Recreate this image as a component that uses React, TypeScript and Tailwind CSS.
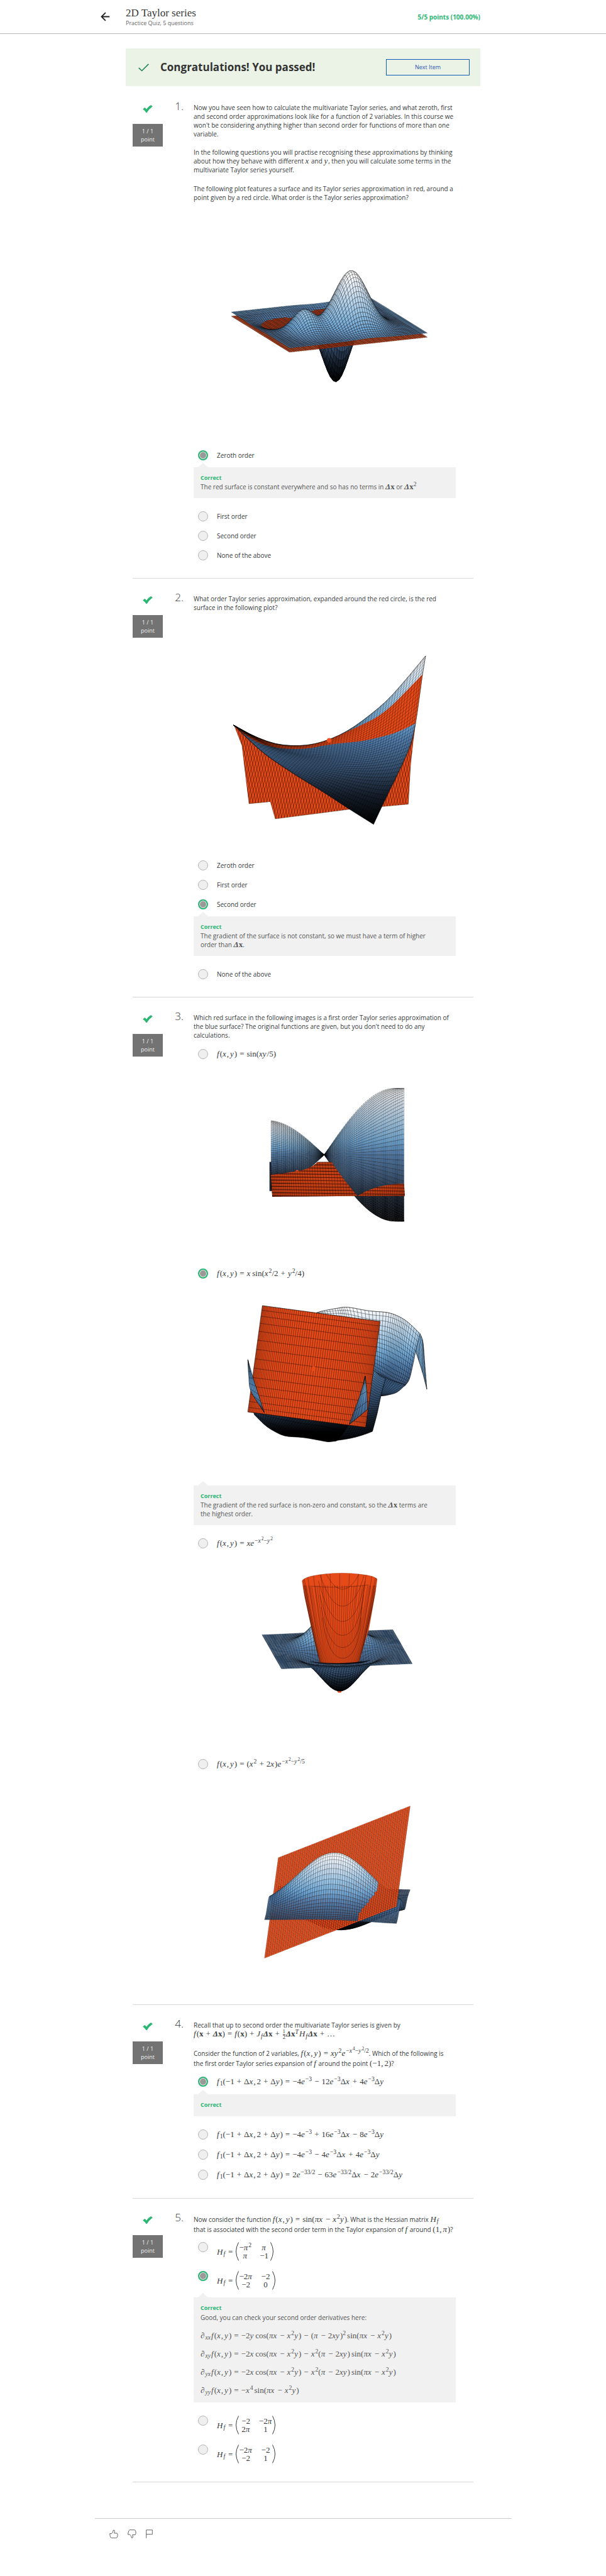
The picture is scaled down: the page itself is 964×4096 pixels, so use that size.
import React, { ReactNode, useId } from "react";

/* ---------- Inline math ---------- */

function braceEnd(src: string, open: number): number {
  let depth = 0;
  for (let i = open; i < src.length; i++) {
    if (src[i] === "{") depth++;
    if (src[i] === "}" && --depth === 0) return i;
  }
  return src.length;
}

function typeset(src: string): ReactNode[] {
  const out: ReactNode[] = [];
  let i = 0;
  while (i < src.length) {
    const c = src[i];
    if (c === "^" || c === "_") {
      const end = braceEnd(src, i + 1);
      const inner = typeset(src.slice(i + 2, end));
      out.push(c === "^" ? <sup key={i}>{inner}</sup> : <sub key={i}>{inner}</sub>);
      i = end + 1;
    } else if (c === "\\") {
      const name = /^[a-z]+/.exec(src.slice(i + 1))![0];
      out.push(
        name === "half" ? (
          <span key={i} className="mx-px inline-flex flex-col items-center align-middle text-[8px] leading-[8px]">
            <span className="border-b border-current">1</span>
            <span>2</span>
          </span>
        ) : (
          <span key={i} className={src[i - 1] === " " ? "" : "ml-0.5"}>{name}</span>
        ),
      );
      i += name.length + 1;
    } else if (c === "@") {
      out.push(
        <b key={i} className={src[i + 1] === "Δ" ? "italic" : ""}>{src[i + 1]}</b>,
      );
      i += 2;
    } else if (c === " " && src[i + 2] === " ") {
      out.push(<span key={i} className="mx-1">{src[i + 1]}</span>);
      i += 3;
    } else if (c === ",") {
      out.push(<span key={i} className="mr-0.5">,</span>);
      i += 1;
    } else if (/[a-zA-Zπ∂]/.test(c)) {
      const run = /^[a-zA-Zπ∂]+/.exec(src.slice(i))![0];
      out.push(<i key={i} className="mr-px">{run}</i>);
      i += run.length;
    } else {
      out.push(<span key={i}>{c}</span>);
      i += 1;
    }
  }
  return out;
}

const M = ({ t }: { t: string }) => (
  <span className="whitespace-nowrap font-['Liberation_Serif',serif] text-[13px] leading-none">{typeset(t)}</span>
);

const Paren = ({ flip }: { flip?: boolean }) => (
  <svg viewBox="0 0 6 30" className={flip ? "h-[30px] w-1.5 -scale-x-100" : "h-[30px] w-1.5"} fill="none" stroke="currentColor">
    <path d="M5.5 .5Q-2.5 15 5.5 29.5" />
  </svg>
);

const Matrix = ({ cells }: { cells: string[] }) => (
  <span className="inline-flex items-center">
    <M t="H_{f} = " />
    <span className="inline-flex items-center">
      <Paren />
      <span className="grid grid-cols-2 items-center justify-items-center gap-x-2.5 leading-[14px]">
        {cells.map((c, i) => (
          <M key={i} t={c} />
        ))}
      </span>
      <Paren flip />
    </span>
  </span>
);

/* ---------- Surface plots ---------- */

type Pt = [number, number];
const RED = "#e64a19";

const RAMP: [number, number[]][] = [
  [0, [0, 0, 0]],
  [0.18, [24, 34, 47]],
  [0.35, [60, 88, 122]],
  [0.5, [82, 124, 170]],
  [0.6, [112, 168, 214]],
  [0.75, [168, 204, 232]],
  [0.88, [216, 230, 243]],
  [1, [255, 255, 255]],
];

function shade(t: number): string {
  const v = Math.max(0, Math.min(1, t));
  const k = Math.max(1, RAMP.findIndex((r) => r[0] >= v));
  const [t0, a] = RAMP[k - 1];
  const [t1, b] = RAMP[k];
  const f = (v - t0) / (t1 - t0);
  return `rgb(${a.map((q, i) => Math.round(q + (b[i] - q) * f)).join(",")})`;
}

type Layer = { z: (a: number, d: number) => number; fill: (z: number) => string };

function heightField(center: Pt, av: Pt, dv: Pt, layers: Layer[], n = 52) {
  const ground = (a: number, d: number): Pt => [center[0] + a * av[0] + d * dv[0], center[1] + a * av[1] + d * dv[1]];
  const at = (i: number) => -1 + (2 * i) / n;
  const quads: { depth: number; z: number; d: string; fill: string }[] = [];
  for (let i = 0; i < n; i++)
    for (let j = 0; j < n; j++) {
      const mid = ground(at(i + 0.5), at(j + 0.5));
      for (const layer of layers) {
        const pts = [[i, j], [i + 1, j], [i + 1, j + 1], [i, j + 1]].map(([p, q]) => {
          const g = ground(at(p), at(q));
          return `${g[0].toFixed(1)} ${(g[1] - layer.z(at(p), at(q))).toFixed(1)}`;
        });
        const z = layer.z(at(i + 0.5), at(j + 0.5));
        quads.push({ depth: mid[1], z, d: `M${pts.join("L")}Z`, fill: layer.fill(z) });
      }
    }
  quads.sort((p, q) => p.depth - q.depth || p.z - q.z);
  return quads.map((q, k) => <path key={k} d={q.d} fill={q.fill} />);
}

function Plot({ y, h, label, line = 0.3, className, children }: { y: number; h: number; label: string; line?: number; className: string; children: ReactNode }) {
  return (
    <svg
      role="img"
      aria-label={label}
      viewBox={`74 ${y} 1387 ${h}`}
      preserveAspectRatio="none"
      className={`block w-full [&_path]:[vector-effect:non-scaling-stroke] ${className}`}
      stroke="#000"
      strokeWidth={line}
      strokeLinejoin="round"
    >
      {children}
    </svg>
  );
}

/* A smooth polyline sampled at t in [0, 1]. */
function along(pts: Pt[], t: number): Pt {
  if (pts.length === 1) return pts[0];
  const s = Math.min(pts.length - 1.0001, Math.max(0, t * (pts.length - 1)));
  const k = Math.floor(s);
  const f = s - k;
  const p = [pts[Math.max(0, k - 1)], pts[k], pts[k + 1], pts[Math.min(pts.length - 1, k + 2)]];
  return [0, 1].map((c) => {
    const [a, b, e, g] = p.map((q) => q[c]);
    return 0.5 * (2 * b + (e - a) * f + (2 * a - 5 * b + 4 * e - g) * f * f + (3 * b - a - 3 * e + g) * f * f * f);
  }) as Pt;
}

const poly = (pts: Pt[]) => "M" + pts.map((p) => `${p[0].toFixed(1)} ${p[1].toFixed(1)}`).join("L");
const curve = (pts: Pt[]) => poly(Array.from({ length: 61 }, (_, i) => along(pts, i / 60)));

type Edges = { top: Pt[]; right: Pt[]; bottom: Pt[]; left: Pt[] };

function coons(e: Edges, u: number, v: number): Pt {
  const t = along(e.top, u), b = along(e.bottom, u), l = along(e.left, v), r = along(e.right, v);
  const t0 = along(e.top, 0), t1 = along(e.top, 1), b0 = along(e.bottom, 0), b1 = along(e.bottom, 1);
  return [0, 1].map(
    (c) =>
      (1 - v) * t[c] + v * b[c] + (1 - u) * l[c] + u * r[c] -
      ((1 - u) * (1 - v) * t0[c] + u * (1 - v) * t1[c] + (1 - u) * v * b0[c] + u * v * b1[c]),
  ) as Pt;
}

function Patch({ e, nu, nv, fill }: { e: Edges; nu: number; nv: number; fill: string }) {
  const steps = Array.from({ length: 25 }, (_, i) => i / 24);
  const lines: string[] = [];
  for (let i = 0; i <= nu; i++) lines.push(poly(steps.map((v) => coons(e, i / nu, v))));
  for (let j = 0; j <= nv; j++) lines.push(poly(steps.map((u) => coons(e, u, j / nv))));
  const outline = [
    ...steps.map((s) => along(e.top, s)),
    ...steps.map((s) => along(e.right, s)),
    ...steps.map((s) => along(e.bottom, 1 - s)),
    ...steps.map((s) => along(e.left, 1 - s)),
  ];
  return (
    <>
      {fill !== "none" && <path d={poly(outline) + "Z"} fill={fill} />}
      <path d={lines.join("")} fill="none" />
    </>
  );
}

function Fade({ id, y1, y2, from = 1, to = 0 }: { id: string; y1: number; y2: number; from?: number; to?: number }) {
  return (
    <linearGradient id={id} gradientUnits="userSpaceOnUse" x1="0" x2="0" y1={y1} y2={y2}>
      {Array.from({ length: 13 }, (_, i) => (
        <stop key={i} offset={i / 12} stopColor={shade(from + ((to - from) * i) / 12)} />
      ))}
    </linearGradient>
  );
}

const bump = (a: number, d: number, ca: number, cd: number, sa: number, sd: number) =>
  Math.exp(-(((a - ca) / sa) ** 2) / 2 - ((d - cd) / sd) ** 2 / 2);

function PlotZeroth() {
  const f = (a: number, d: number) =>
    380 * bump(a, d, 0.19, 0.3, 0.22, 0.25) +
    140 * bump(a, d, -0.47, 0.25, 0.14, 0.22) -
    462 * bump(a, d, 0.24, -0.34, 0.18, 0.22) -
    130 * bump(a, d, -0.45, -0.3, 0.22, 0.2);
  return (
    <Plot y={-273} h={1624} label="Surface with a constant red approximation" className="h-[387px]">
      {heightField([792, 532], [364.5, -50], [154, 120], [
        { z: () => -28, fill: () => "#e04818" },
        { z: f, fill: (z) => shade((z + 430) / 790) },
      ], 58)}
    </Plot>
  );
}

function PlotSecond() {
  const id = useId();
  const top: Pt[] = [[285, 583], [390, 655], [500, 706], [600, 721], [700, 712], [800, 675], [900, 612], [1000, 522], [1100, 415], [1200, 275], [1301, 122]];
  const right: Pt[] = [[1301, 122], [1285, 245], [1267, 410], [1248, 570], [1220, 720], [1165, 880], [1095, 1060], [1026, 1245]];
  const bottom: Pt[] = [[285, 583], [440, 765], [600, 905], [760, 1030], [900, 1145], [1026, 1245]];
  const hatch: string[] = [];
  for (let x = 100; x < 1500; x += 15) hatch.push(`M${x} 550Q${x + 70} 850 ${x + 130} 1230`, `M${x + 110} 550Q${x + 50} 850 ${x - 50} 1230`);
  const back = "M290 590L330 720L345 880L367 1108L480 1094L506 1209L900 1145L1070 1127L1210 1111L1222 850L1235 700L1248 570L800 780L500 745Z";
  return (
    <Plot y={-172} h={1624} label="Saddle surface with a red second order approximation" className="h-[387px]">
      <defs>
        <Fade id={id + "b"} y1={122} y2={1230} />
        <clipPath id={id + "c"}>
          <path d={back} />
        </clipPath>
      </defs>
      <path d={back} fill={RED} />
      <g clipPath={`url(#${id}c)`} strokeWidth="0.4">
        <path d={hatch.join("")} fill="none" />
      </g>
      <Patch e={{ top, right, bottom, left: [[285, 583]] }} nu={1} nv={1} fill={`url(#${id}b)`} />
      <path
        stroke="none"
        fill={RED}
        d={
          curve([[285, 583], [390, 655], [500, 706], [600, 721], [700, 712], [800, 675], [880, 630], [960, 583], [1040, 532], [1120, 455], [1200, 355], [1285, 245]]) +
          curve([[1285, 245], [1267, 410], [1248, 572]]).replace("M", "L") +
          curve([[1248, 572], [1150, 630], [1060, 663], [960, 690], [840, 706], [750, 722], [680, 738], [600, 742], [500, 731], [400, 690], [300, 605]]).replace("M", "L") +
          "Z"
        }
      />
      <Patch e={{ top, right, bottom, left: [[285, 583]] }} nu={64} nv={40} fill="none" />
      <ellipse cx="791" cy="685" rx="12" ry="16" fill="#f04e23" stroke="none" />
    </Plot>
  );
}

function PlotSine() {
  const id = useId();
  const lobe = (x0: number, x1: number, amp: number, quarter: number, n: number) => {
    const quads: ReactNode[] = [];
    const rows = 44;
    for (let i = 0; i < n; i++)
      for (let j = 0; j < rows; j++) {
        const val = (x: number, t: number) => Math.sin(((Math.abs(x - 765) / quarter) * Math.PI * t) / 2);
        const xs = [x0 + ((x1 - x0) * i) / n, x0 + ((x1 - x0) * (i + 1)) / n];
        const ts = [-1 + (2 * j) / rows, -1 + (2 * (j + 1)) / rows];
        const p = (x: number, t: number) => `${x.toFixed(1)} ${(597 - amp * val(x, t)).toFixed(1)}`;
        quads.push(
          <path
            key={`${i}-${j}`}
            d={`M${p(xs[0], ts[0])}L${p(xs[1], ts[0])}L${p(xs[1], ts[1])}L${p(xs[0], ts[1])}Z`}
            fill={shade(0.5 + 0.5 * val((xs[0] + xs[1]) / 2, (ts[0] + ts[1]) / 2))}
          />,
        );
      }
    return quads;
  };
  return (
    <Plot y={0} h={1322} label="Sine surface with a red plane below it" className="mt-[3px] h-[315px]">
      <defs>
        <clipPath id={id + "r"}>
          <path d="M476 645L482 731Q560 720 620 706Q700 690 730 643L803 643Q850 735 941 872L490 877Z" />
          <path d="M941 872Q980 838 1040 815T1187 790L1192 872Z" />
        </clipPath>
      </defs>
      <path d="M476 645L486 645L490 838L476 838Z" fill="#1c2a3a" />
      {lobe(484, 765, 229, 300, 26)}
      {lobe(765, 1187, 444, 375, 40)}
      <g clipPath={`url(#${id}r)`}>
        <Patch
          e={{ top: [[476, 645], [1181, 645]], right: [[1181, 645], [1192, 872]], bottom: [[490, 877], [1192, 872]], left: [[476, 645], [490, 877]] }}
          nu={60}
          nv={28}
          fill="#e04818"
        />
        {Array.from({ length: 11 }, (_, i) => (
          <path key={i} d={`M470 ${660 + i * 21}L1195 ${672 + i * 21}`} stroke="#200800" strokeWidth="0.8" />
        ))}
      </g>
      <path d="M610 708L622 697L632 706Z" fill="#f04e23" stroke="none" />
    </Plot>
  );
}

function PlotRipple() {
  const id = useId();
  return (
    <Plot y={-40} h={1163} line={0.4} label="Rippled surface with a tangent red plane" className="h-[318px]">
      <defs>
        <Fade id={id + "a"} y1={100} y2={620} to={0.25} />
        <Fade id={id + "b"} y1={460} y2={860} from={0.58} to={0.05} />
        <Fade id={id + "c"} y1={500} y2={790} from={0.72} to={0.3} />
        <Fade id={id + "d"} y1={690} y2={830} from={0.3} to={0} />
      </defs>
      <Patch
        e={{
          top: [[1272, 255], [1285, 290], [1290, 330]],
          right: [[1290, 330], [1300, 470], [1308, 578]],
          bottom: [[1247, 350], [1285, 480], [1308, 578]],
          left: [[1272, 255], [1255, 300], [1247, 350]],
        }}
        nu={4}
        nv={8}
        fill="#7fb0da"
      />
      <Patch
        e={{
          top: [[725, 133], [760, 122], [835, 107], [890, 101], [1000, 122], [1100, 132], [1160, 155], [1210, 190], [1272, 255]],
          right: [[1272, 255], [1250, 350], [1235, 430], [1215, 520], [1190, 560]],
          bottom: [[725, 200], [850, 300], [980, 430], [1065, 500], [1120, 535], [1190, 560]],
          left: [[725, 133], [725, 200]],
        }}
        nu={44}
        nv={15}
        fill={`url(#${id}a)`}
      />
      <Patch
        e={{
          top: [[1000, 460], [1060, 490], [1120, 525], [1195, 552]],
          right: [[1195, 552], [1150, 595], [1100, 612], [1065, 617]],
          bottom: [[1000, 600], [1030, 610], [1065, 617]],
          left: [[1000, 460], [1000, 600]],
        }}
        nu={20}
        nv={20}
        fill="#40628a"
      />
      <Patch
        e={{
          top: [[985, 460], [1030, 472], [1060, 500], [1090, 515]],
          right: [[1090, 515], [1065, 617], [1045, 720], [1020, 823]],
          bottom: [[820, 877], [880, 868], [935, 855], [985, 838], [1020, 823]],
          left: [[985, 460], [940, 650], [820, 877]],
        }}
        nu={15}
        nv={28}
        fill={`url(#${id}b)`}
      />
      <Patch
        e={{
          top: [[390, 700], [600, 720], [800, 750], [900, 770]],
          right: [[900, 770], [860, 840], [830, 878]],
          bottom: [[395, 725], [450, 785], [500, 822], [560, 850], [650, 858], [730, 873], [785, 883], [830, 878]],
          left: [[390, 700], [395, 725]],
        }}
        nu={44}
        nv={3}
        fill={`url(#${id}d)`}
      />
      <path d="M505 824Q560 852 650 858T785 883L830 878Q760 818 650 818T505 824Z" fill="#000" />
      <Patch
        e={{ top: [[438, 92], [1061, 184]], right: [[1061, 184], [984, 800]], bottom: [[361, 710], [984, 800]], left: [[438, 92], [361, 710]] }}
        nu={64}
        nv={14}
        fill={RED}
      />
      <path d="M697 462L706 440L722 455L716 470L700 476Z" fill={RED} stroke="none" />
      <Patch
        e={{
          top: [[361, 406]],
          right: [[361, 406], [385, 500], [420, 620], [447, 712]],
          bottom: [[447, 712]],
          left: [[361, 406], [366, 500], [378, 590], [447, 712]],
        }}
        nu={4}
        nv={8}
        fill="#5c8fc0"
      />
      <Patch
        e={{
          top: [[982, 502]],
          right: [[982, 502], [990, 590], [994, 695]],
          bottom: [[897, 783], [940, 745], [994, 695]],
          left: [[982, 502], [955, 610], [897, 783]],
        }}
        nu={6}
        nv={4}
        fill={`url(#${id}c)`}
      />
    </Plot>
  );
}

function PlotBucket() {
  const f = (a: number, d: number) => {
    const x = 2.4 * d;
    const y = 2.4 * a;
    return -571 * x * Math.exp(-x * x - y * y);
  };
  const xs = Array.from({ length: 49 }, (_, i) => -1 + i / 24);
  const outline =
    "M648 142Q660 112 760 97T960 98Q1030 108 1045 130L1036 215L1000 470L975 570L948 686Q845 698 743 686L722 590L700 470L662 250Z";
  return (
    <Plot y={-46} h={1343} label="Surface with a red paraboloid" className="h-[320px]">
      <ellipse cx="846" cy="877" rx="11" ry="11" fill="#f04e23" stroke="none" />
      {heightField([833.5, 598], [346, -17], [51.5, 113.5], [{ z: f, fill: (z) => shade((z + 245) / 500) }])}
      <defs>
        <clipPath id="bucket">
          <path d={outline} />
        </clipPath>
      </defs>
      <path d={outline} fill={RED} stroke="#7a2108" />
      <g clipPath="url(#bucket)" fill="none">
        {xs.map((t, i) => {
          const s = Math.sin((t * Math.PI) / 2);
          return <path key={i} d={`M${847 + 198 * s} ${i % 4 ? 172 : 95}Q${847 + 155 * s} 430 ${846 + 104 * s} 695`} />;
        })}
        {[197, 310, 412, 505, 586, 658].map((y) => (
          <path key={y} d={`M${700 + y / 12} ${y - 270}C780 ${y - 60} 820 ${y} 862 ${y}S950 ${y - 60} ${1015 - y / 12} ${y - 270}`} />
        ))}
        <path d="M700 177Q850 195 1000 168" />
      </g>
      <path d="M690 680Q845 708 1010 672L960 690Q845 704 740 692Z" fill="#05080c" />
    </Plot>
  );
}

function PlotHill() {
  const f = (a: number, d: number) => {
    const x = 2.3 * d;
    const y = 2.8 * a;
    return 329 * (x * x + 2 * x) * Math.exp(-x * x - (y * y) / 5);
  };
  return (
    <Plot y={-13} h={1453} line={0.2} label="Hill and valley cut by a steep red plane" className="h-[346px]">
      {heightField([834.5, 865], [349, 12.5], [-36.5, 114.5], [
        { z: (a, d) => 153 + 185 * a - 221 * d, fill: () => "#f04e1a" },
        { z: f, fill: (z) => shade((z + 188) / 576) },
      ], 58)}
    </Plot>
  );
}

/* ---------- Quiz parts ---------- */

function Option({ name, checked, math, top, children }: { name: string; checked?: boolean; math?: boolean; top?: boolean; children: ReactNode }) {
  return (
    <label
      className={
        top ? "flex h-[46px] items-start gap-3.5 pt-2 pl-[7px]" : math ? "flex h-8 items-center gap-3.5 pl-[7px]" : "flex h-[31px] items-center gap-3.5 pl-[7px]"
      }
    >
      <input
        type="radio"
        name={name}
        defaultChecked={checked}
        className="size-4 shrink-0 appearance-none rounded-full border border-[#b5b5b5] bg-[#efefef] checked:border-2 checked:border-[#2bb673] checked:bg-[#999] checked:shadow-[inset_0_0_0_1px_#efefef]"
      />
      <span>{children}</span>
    </label>
  );
}

function Feedback({ children }: { children?: ReactNode }) {
  return (
    <div className="relative mt-1 mb-[13px] bg-[#f1f1f1] px-[11px] pt-2.5 pb-[11px] text-[#555]">
      <span className="absolute -top-[7px] left-[7px] border-x-8 border-b-[7px] border-x-transparent border-b-[#f1f1f1]" />
      <p className="text-[9px] leading-[14px] font-bold text-[#2bb673]">Correct</p>
      {children}
    </div>
  );
}

const BoldCheck = () => (
  <svg viewBox="0 0 22 17" className="h-3 w-4" fill="#2bb673">
    <path d="M0 9.5L3.8 5.8Q6.5 7 8 9.6Q12 3.5 18.2 0L22 3.2Q14.5 8.5 9.2 17H7.4Q4.5 12 0 9.5Z" />
  </svg>
);

function Question({ n, children }: { n: number; children: ReactNode }) {
  return (
    <section className="mx-[11px] flex border-b border-[#d8d8d8] pb-[21px]">
      <div className="flex w-12 shrink-0 flex-col items-center pt-7">
        <BoldCheck />
        <div className="mt-[18px] w-full bg-[#737373] py-[5px] text-center text-[9px] leading-[13px] text-[#f0f0f0]">
          1 / 1
          <br />
          point
        </div>
      </div>
      <div className="w-[49px] shrink-0 pt-[18px] pr-4 text-right text-[17px] leading-6 font-light">{n}.</div>
      <div className="mr-7 min-w-0 flex-1 pt-[25px]">{children}</div>
    </section>
  );
}

export default function App() {
  return (
    <div className="bg-white font-['Open_Sans',sans-serif] text-[10px] leading-[14px] text-[#373a3c]">
      <header className="border-b border-[#bbb]">
        <div className="mx-auto flex h-[53px] max-w-[644px] items-center pr-10">
          <button type="button" aria-label="Back" className="w-10">
            <svg viewBox="0 0 20 20" className="size-[15px]" fill="none" stroke="#222" strokeWidth="2.4">
              <path d="M19 10H2M10.500 1.500L2 10L10.500 18.500" />
            </svg>
          </button>
          <div className="flex-1">
            <h1 className="font-['Liberation_Serif',serif] text-[17px] leading-5">2D Taylor series</h1>
            <p className="text-[9px] leading-3 text-[#666]">Practice Quiz, 5 questions</p>
          </div>
          <p className="font-bold text-[#2bb673]">5/5 points (100.00%)</p>
        </div>
      </header>

      <main className="mx-auto max-w-[564px] pt-[23px]">
        <div className="mb-0.5 flex h-[60px] items-center bg-[#ebf3e7] pr-[17px] pl-5">
          <svg viewBox="0 0 24 18" className="h-[13px] w-[17px]" fill="none" stroke="#1f8354" strokeWidth="2.200">
            <path d="M1 9.500L8 16L23 1" />
          </svg>
          <h2 className="ml-[18px] flex-1 text-[17px] font-bold text-[#333]">Congratulations! You passed!</h2>
          <button type="button" className="h-[26px] w-[133px] border border-[#0f5cb8] text-[9px] text-[#2a56b5]">
            Next Item
          </button>
        </div>

        <Question n={1}>
          <p>
            Now you have seen how to calculate the multivariate Taylor series, and what zeroth, first and second order approximations look like for a
            function of 2 variables. In this course we won't be considering anything higher than second order for functions of more than one
            variable.
          </p>
          <p className="mt-[15px]">
            In the following questions you will practise recognising these approximations by thinking about how they behave with different{" "}
            <M t="x" /> and <M t="y" />, then you will calculate some terms in the multivariate Taylor series yourself.
          </p>
          <p className="mt-4">
            The following plot features a surface and its Taylor series approximation in red, around a point given by a red circle. What order is
            the Taylor series approximation?
          </p>
          <PlotZeroth />
          <Option name="q1" checked>Zeroth order</Option>
          <Feedback>
            <p>
              The red surface is constant everywhere and so has no terms in <M t="@Δ@x" /> or <M t="@Δ@x^{2}" />
            </p>
          </Feedback>
          <Option name="q1">First order</Option>
          <Option name="q1">Second order</Option>
          <Option name="q1">None of the above</Option>
        </Question>

        <Question n={2}>
          <p>What order Taylor series approximation, expanded around the red circle, is the red surface in the following plot?</p>
          <PlotSecond />
          <Option name="q2">Zeroth order</Option>
          <Option name="q2">First order</Option>
          <Option name="q2" checked>Second order</Option>
          <Feedback>
            <p>
              The gradient of the surface is not constant, so we must have a term of higher <br />
              order than <M t="@Δ@x" />.
            </p>
          </Feedback>
          <Option name="q2">None of the above</Option>
        </Question>

        <Question n={3}>
          <p className="mb-[7px]">
            Which red surface in the following images is a first order Taylor series approximation of the blue surface? The original functions are
            given, but you don't need to do any calculations.
          </p>
          <Option name="q3"><M t="f(x,y) = \sin(xy/5)" /></Option>
          <PlotSine />
          <Option name="q3" checked><M t="f(x,y) = x\sin(x^{2}/2 + y^{2}/4)" /></Option>
          <PlotRipple />
          <Feedback>
            <p>
              The gradient of the red surface is non-zero and constant, so the <M t="@Δ@x" /> terms are <br />
              the highest order.
            </p>
          </Feedback>
          <Option name="q3"><M t="f(x,y) = xe^{−x^{2}−y^{2}}" /></Option>
          <PlotBucket />
          <Option name="q3"><M t="f(x,y) = (x^{2} + 2x)e^{−x^{2}−y^{2}/5}" /></Option>
          <PlotHill />
        </Question>

        <Question n={4}>
          <p>
            Recall that up to second order the multivariate Taylor series is given by
            <br />
            <M t="f(@x + @Δ@x) = f(@x) + J_{f}@Δ@x + \half@Δ@x^{T}H_{f}@Δ@x + …" />
          </p>
          <p className="mt-[13px] mb-[5px] leading-4">
            Consider the function of 2 variables, <M t="f(x,y) = xy^{2}e^{−x^{4}−y^{2}/2}" />. Which of the following is <br />
            the first order Taylor series expansion of <M t="f" /> around the point <M t="(−1,2)" />?
          </p>
          <Option name="q4" math checked><M t="f_{1}(−1 + Δx,2 + Δy) = −4e^{−3} − 12e^{−3}Δx + 4e^{−3}Δy" /></Option>
          <Feedback />
          <Option name="q4" math><M t="f_{1}(−1 + Δx,2 + Δy) = −4e^{−3} + 16e^{−3}Δx − 8e^{−3}Δy" /></Option>
          <Option name="q4" math><M t="f_{1}(−1 + Δx,2 + Δy) = −4e^{−3} − 4e^{−3}Δx + 4e^{−3}Δy" /></Option>
          <Option name="q4" math><M t="f_{1}(−1 + Δx,2 + Δy) = 2e^{−33/2} − 63e^{−33/2}Δx − 2e^{−33/2}Δy" /></Option>
        </Question>

        <Question n={5}>
          <p className="mb-1 leading-4">
            Now consider the function <M t="f(x,y) = \sin(πx − x^{2}y)" />. What is the Hessian matrix <M t="H_{f}" /> <br />
            that is associated with the second order term in the Taylor expansion of <M t="f" /> around <M t="(1,π)" />?
          </p>
          <Option name="q5" top><Matrix cells={["−π^{2}", "π", "π", "−1"]} /></Option>
          <Option name="q5" top checked><Matrix cells={["−2π", "−2", "−2", "0"]} /></Option>
          <Feedback>
            <div className="flex flex-col gap-[15px] py-px">
              <p>Good, you can check your second order derivatives here:</p>
              <p><M t="∂_{xx}f(x,y) = −2y\cos(πx − x^{2}y) − (π − 2xy)^{2}\sin(πx − x^{2}y)" /></p>
              <p><M t="∂_{xy}f(x,y) = −2x\cos(πx − x^{2}y) − x^{2}(π − 2xy)\sin(πx − x^{2}y)" /></p>
              <p><M t="∂_{yx}f(x,y) = −2x\cos(πx − x^{2}y) − x^{2}(π − 2xy)\sin(πx − x^{2}y)" /></p>
              <p><M t="∂_{yy}f(x,y) = −x^{4}\sin(πx − x^{2}y)" /></p>
            </div>
          </Feedback>
          <Option name="q5" top><Matrix cells={["−2", "−2π", "2π", "1"]} /></Option>
          <Option name="q5" top><Matrix cells={["−2π", "−2", "−2", "1"]} /></Option>
        </Question>
      </main>

      <footer className="mx-auto mt-[57px] flex max-w-[663px] gap-[15px] border-t border-[#ccc] px-[23px] pt-[17px] pb-[58px] text-[#555]">
        <button type="button" aria-label="Like">
          <svg viewBox="0 0 20 20" className="size-3.5" fill="none" stroke="currentColor" strokeWidth="1.300">
            <path d="M1 9.500H5Q8.500 6.500 9 1.500Q12.500 .5 12 5L11 8.500H17Q19.500 10 18.500 15Q17.500 19.500 15 19.500H5Q1.500 19 1 9.500Z" />
          </svg>
        </button>
        <button type="button" aria-label="Dislike">
          <svg viewBox="0 0 20 20" className="size-3.5" fill="none" stroke="currentColor" strokeWidth="1.300">
            <path d="M1 11.500H5Q8.500 14 9 19Q12.500 20 12 15.500L11 12H17.500Q19.500 9 18.500 4.500Q17.500 1 15 1H5Q1.500 2 1 11.500Z" />
          </svg>
        </button>
        <button type="button" aria-label="Flag">
          <svg viewBox="0 0 16 20" className="h-3.5 w-[11px]" fill="none" stroke="currentColor" strokeWidth="1.300">
            <path d="M1 20V1H15V11H1" />
          </svg>
        </button>
      </footer>
    </div>
  );
}
